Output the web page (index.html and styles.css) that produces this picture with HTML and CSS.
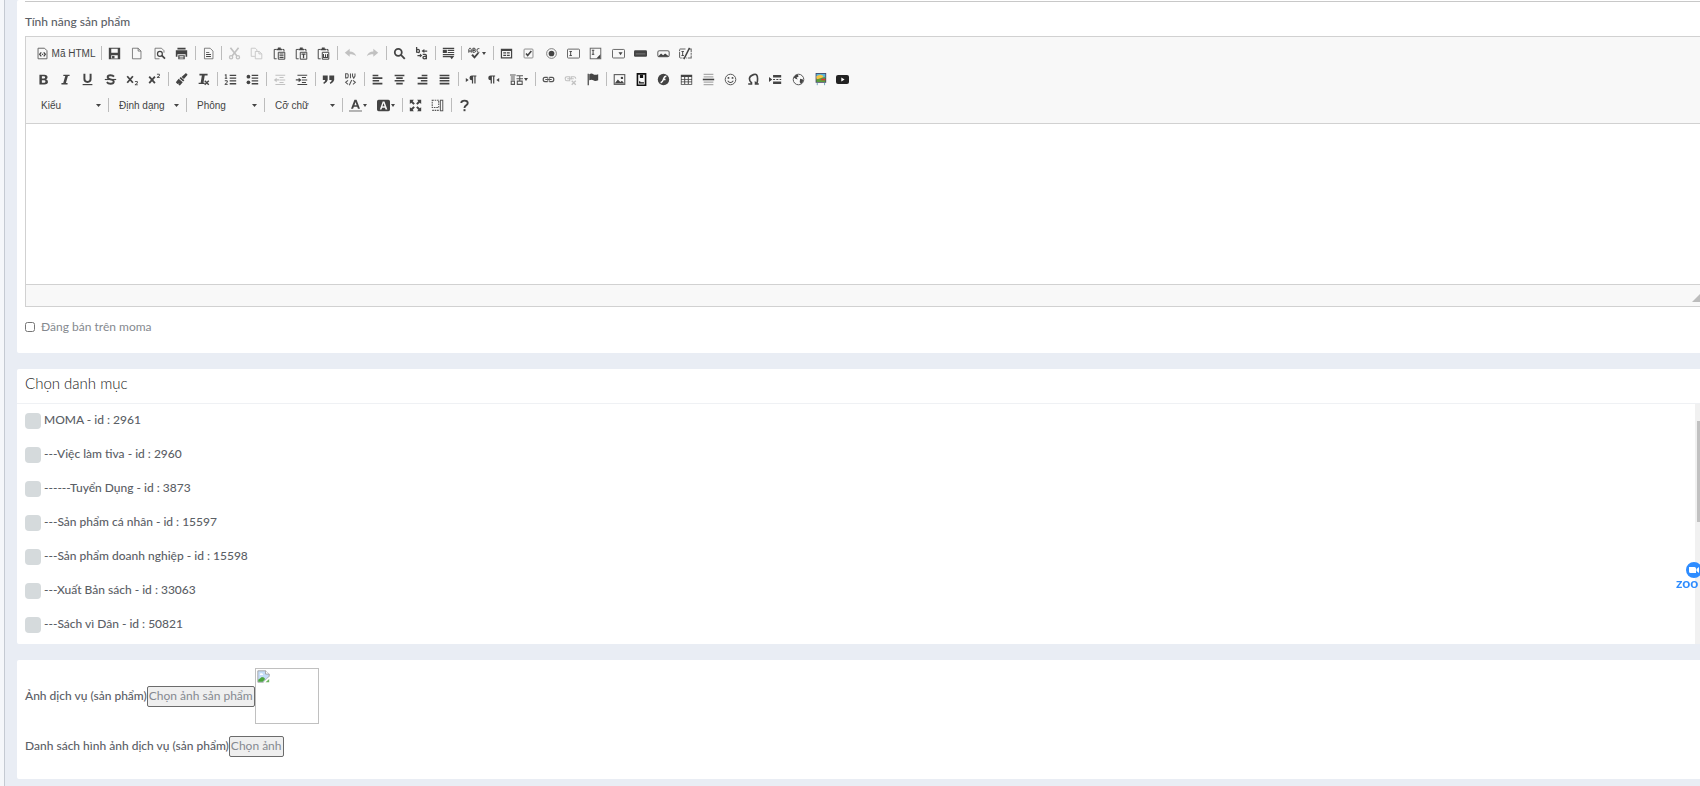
FILE: index.html
```html
<!DOCTYPE html>
<html lang="vi">
<head>
    <meta charset="UTF-8">
    <meta name="viewport" content="width=device-width, initial-scale=1.0">
    <title>Sản phẩm</title>
    <link rel="stylesheet" href="styles.css">
</head>
<body>

<svg class="sprite" aria-hidden="true">
    <symbol id="source" viewBox="0 0 16 16"><path d="M2.500 1.500h8l3 3v10h-11z" fill="none" stroke="#666" stroke-width="1.200"/><path d="M6.500 6.500 4.500 9l2 2.500M9.500 6.500l2 2.500-2 2.500" fill="none" stroke="#444" stroke-width="1.600"/><path d="M7.300 8.300h1.500v1.500H7.300z"/></symbol>
    <symbol id="save" viewBox="0 0 16 16"><path d="M1 1h14v14H1zM4 2v5h8V2zM4 10v4h8v-4z" fill-rule="evenodd"/><path d="M5 11h3v3H5z"/></symbol>
    <symbol id="newpage" viewBox="0 0 16 16"><path d="M3 1.500h7l3.500 3.500v9.500H3zM10 1.500V5h3.500" fill="none" stroke="#666"/></symbol>
    <symbol id="preview" viewBox="0 0 16 16"><path d="M13.500 7V4.500l-3-3h-8v13H8" fill="none" stroke="#666"/><circle cx="8.500" cy="8.500" r="3" fill="none" stroke="#444" stroke-width="1.500"/><path d="m10 11 1.500-1.500 4 4-1.500 1.500z"/></symbol>
    <symbol id="print" viewBox="0 0 16 16"><path d="M3 1h10v2H3zM1 4h14v8h-2V9H3v3H1z"/><path d="M4 10h8v5H4zm1.500 1v1h5v-1zm0 2v1h5v-1z" fill-rule="evenodd"/></symbol>
    <symbol id="templates" viewBox="0 0 16 16"><path d="M3 1.500h7l3.500 3.500v9.500H3z" fill="none" stroke="#666"/><path d="M5 6h4v1H5zM5 8.500h6v1.200H5zM5 11h6v1.200H5z"/></symbol>
    <symbol id="cut" viewBox="0 0 16 16"><path d="m3 1 8 10M13 1 5 11" fill="none" stroke="#444" stroke-width="2"/><circle cx="3.800" cy="12.500" r="2" fill="none" stroke="#444" stroke-width="1.600"/><circle cx="12.200" cy="12.500" r="2" fill="none" stroke="#444" stroke-width="1.600"/></symbol>
    <symbol id="copy" viewBox="0 0 16 16"><path d="M6 11.500H1.500v-10h5l2 2V5M6.500 5.500h5l3 3v6h-8z" fill="none" stroke="#444"/><path d="M11 5.500v3h3" fill="none" stroke="#444"/></symbol>
    <symbol id="paste" viewBox="0 0 16 16"><path d="M4.500 3H1.500v11.500h3M11.500 3h2v2.500" fill="none" stroke="#444" stroke-width="1.200"/><path d="M4.500 2H6V.5h3.500V2H11v2H4.500z"/><path d="M6.500 6.500h8v8.500h-8z" fill="none" stroke="#444" stroke-width="1.200"/></symbol>
    <symbol id="pastelines" viewBox="0 0 16 16"><use href="#paste"/><path d="M8 8h5v1.200H8zM8 10.200h5v1.200H8zM8 12.300h5v1.200H8z"/></symbol>
    <symbol id="pastetext" viewBox="0 0 16 16"><use href="#paste"/><path d="M8 8h5v1.500h-1.700v4.300H9.700V9.500H8z"/></symbol>
    <symbol id="pasteword" viewBox="0 0 16 16"><use href="#paste"/><path d="M8 8.500v4.500h5V8.500M10.500 9v4" fill="none" stroke="#444" stroke-width="1.300"/></symbol>
    <symbol id="undo" viewBox="0 0 16 16"><path d="m1 7 6-5v3.500c4 0 7 2 8 6-2-2-4.500-2.500-8-2.500v3z"/></symbol>
    <symbol id="redo" viewBox="0 0 16 16"><path d="M15 7 9 2v3.500c-4 0-7 2-8 6C3 9.500 5.500 9 9 9v3z"/></symbol>
    <symbol id="find" viewBox="0 0 16 16"><circle cx="6.500" cy="6.500" r="4.300" fill="none" stroke="#444" stroke-width="2.200"/><path d="m9 10.500 1.500-1.500 4.800 4.800-1.600 1.600z"/></symbol>
    <symbol id="replace" viewBox="0 0 16 16"><path d="M2 0v7M2 4.500q0-1.500 1.700-1.500T5.500 5 3.700 6.700 2 5M9.500 9h3q1.500 0 1.500 1.500V15M14 11.500h-2.500q-1.700 0-1.700 1.500t1.700 1.500T14 13M15 5h-4M3 10.500h4" fill="none" stroke="#444" stroke-width="1.600"/><path d="m8 5 3.500-2.500v5zM9 10.500 6 8v5z"/></symbol>
    <symbol id="selectall" viewBox="0 0 16 16"><path d="M1 1h14v1.500H1zM1 3.500h5v4H1zM7 3.500h8V5H7zM7 6h8v1.500H7zM1 8.500h14V10H1zM1 11h9v1.500H1zM9 11h6l-3 4z"/></symbol>
    <symbol id="spell" viewBox="0 0 16 16"><path d="M1 7V3l1-1.500h1L4 3v4M1 5h3M6 6.500v-5h1.500Q9 1.500 9 2.800T7.500 4H6h2q1.300.2 1.300 1.300T8 6.500zM14 2h-1.500Q11 2 11 4t1.500 2.500H14" fill="none" stroke="#444" stroke-width="1.200"/><path d="m4 10 2-1.500 2 2.500 4-4.500 1.500 1.500L8 14.500z"/></symbol>
    <symbol id="form" viewBox="0 0 16 16"><path d="M1 2h14v12H1zM2.500 5v7.500h11V5z" fill-rule="evenodd"/><path d="M4 6.500h3.500V8H4zM8.500 6.500H12V8H8.500zM4 9.500h3.500V11H4zM8.500 9.500H12V11H8.500z"/></symbol>
    <symbol id="checkbox" viewBox="0 0 16 16"><rect x="2.500" y="2.500" width="11" height="11" rx="1" fill="none" stroke="#777"/><path d="m5 8 2 2.500L11.500 5" fill="none" stroke="#444" stroke-width="2"/></symbol>
    <symbol id="radio" viewBox="0 0 16 16"><circle cx="8" cy="8" r="6" fill="none" stroke="#666"/><circle cx="8" cy="8" r="3.500"/></symbol>
    <symbol id="textfield" viewBox="0 0 16 16"><rect x=".6" y="2.600" width="14.800" height="11" rx="1" fill="none" stroke="#666" stroke-width="1.200"/><path d="M3 5.500h3M3 10.500h3M4.500 5.500v5" fill="none" stroke="#444" stroke-width="1.200"/></symbol>
    <symbol id="textarea" viewBox="0 0 16 16"><rect x="1.500" y="1.500" width="13" height="13" fill="none" stroke="#666" stroke-width="1.200"/><path d="M3.500 4h3M3.500 9h3M5 4v5" fill="none" stroke="#444" stroke-width="1.200"/><path d="M14 9v5H9z"/></symbol>
    <symbol id="select" viewBox="0 0 16 16"><rect x=".6" y="3" width="14.800" height="10.500" rx="1" fill="none" stroke="#666" stroke-width="1.200"/><path d="M8 6.500h5L10.500 10z"/></symbol>
    <symbol id="button" viewBox="0 0 16 16"><rect y="4" width="16" height="8" rx="1.500"/><path d="M2 8.500h12" stroke="#888"/></symbol>
    <symbol id="imagebutton" viewBox="0 0 16 16"><rect x="1" y="4.500" width="14" height="7.500" rx="2" fill="none" stroke="#666" stroke-width="1.300"/><path d="m2 11 3-3 2.500 2L10 8l4 3v1H2z"/></symbol>
    <symbol id="hidden" viewBox="0 0 16 16"><path d="M8 2.500H.7v11H6M12 2.500h3v11h-6" fill="none" stroke="#666" stroke-width="1.300" stroke-dasharray="7 1 2 1"/><path d="M3 5.500h3M3 10.500h3M4.500 5.500v5" fill="none" stroke="#444" stroke-width="1.200"/><path d="m6 15 7-14" stroke="#444" stroke-width="1.800"/></symbol>

    <symbol id="bold" viewBox="0 0 16 16"><path d="M3 2h6q4 0 4 3.200 0 2-1.800 2.600Q13.500 8.400 13.500 11q0 3-4.500 3H3zm3 2v2.800h2.500q1.500 0 1.500-1.400T8.500 4zm0 4.800V12h2.700q1.700 0 1.700-1.600T8.700 8.800z" fill-rule="evenodd"/></symbol>
    <symbol id="italic" viewBox="0 0 16 16"><path d="M5.500 2H13v1.700h-2L8.500 12.300h2V14H3v-1.700h2.200l2.500-8.600H5.200z"/></symbol>
    <symbol id="underline" viewBox="0 0 16 16"><path d="M4.200 1v6.500Q4.200 11 8 11t3.800-3.500V1" fill="none" stroke="#444" stroke-width="2.400"/><path d="M2 13.500h12V15H2z"/></symbol>
    <symbol id="strike" viewBox="0 0 16 16"><path d="M12.300 4.500Q11 2.800 8 2.800 4.500 2.800 4.500 5T8 7.800q4 .6 4 3T8 13.200Q5 13.200 3.500 11.300" fill="none" stroke="#444" stroke-width="2.300"/><path d="M1 7.300h14v1.400H1z"/></symbol>
    <symbol id="sub" viewBox="0 0 16 16"><path d="m1.500 4 7 8m0-8-7 8" stroke="#444" stroke-width="2.200"/><path d="M11 10.500h3v2l-3 2h3.500" fill="none" stroke="#444" stroke-width="1.100"/></symbol>
    <symbol id="sup" viewBox="0 0 16 16"><path d="m1.500 4.500 7 8m0-8-7 8" stroke="#444" stroke-width="2.200"/><path d="M11 1.500h3v2l-3 2h3.500" fill="none" stroke="#444" stroke-width="1.100"/></symbol>
    <symbol id="brush" viewBox="0 0 16 16"><path d="m13.500 0 2 2-4.500 5.500L8 5zM7 5l4.500 4-1.500 1.500L5.500 6.500zM4.500 7l5 4.500L6 15.500l-2-1L5.500 13 3 13.500l-2-2z"/></symbol>
    <symbol id="removeformat" viewBox="0 0 16 16"><path d="M3 1h10v2.200H9.500L8 12h1.500v1.500H2V12h2.500L6 3.200H3z"/><path d="m9.500 9.500 5 5m0-5-5 5" stroke="#444" stroke-width="1.700"/></symbol>
    <symbol id="ol" viewBox="0 0 16 16"><path d="M2.500 1.500v5M1 2.500h1.500M1 6.500h3M1 9.500h3v2L1 14h3.500" fill="none" stroke="#444" stroke-width="1.200"/><path d="M7 2h8v1.600H7zM7 5.400h8V7H7zM7 9h8v1.600H7zM7 12.400h8V14H7z"/></symbol>
    <symbol id="ul" viewBox="0 0 16 16"><circle cx="3" cy="4.500" r="2.300"/><circle cx="3" cy="11.500" r="2.300"/><path d="M7 2h8v1.600H7zM7 5.400h8V7H7zM7 9h8v1.600H7zM7 12.400h8V14H7z"/></symbol>
    <symbol id="outdent" viewBox="0 0 16 16"><path d="M3 2h12v1.300H3zM8 5h5v1.300H8zM8 8h7v1.300H8zM8 11h5v1.300H8zM3 13.500h12v1.300H3zM1 8.500 4.500 5.800v2h3v1.500h-3v2z"/></symbol>
    <symbol id="indent" viewBox="0 0 16 16"><path d="M3 2h12v1.300H3zM8.500 5h5v1.300h-5zM8.500 8H15v1.300H8.500zM8.500 11h5v1.300h-5zM3 13.500h12v1.300H3zM8 8.500 4.500 5.800v2H1v1.500h3.500v2z"/></symbol>
    <symbol id="quote" viewBox="0 0 16 16"><path d="M1 3h6v5.500Q6 12 2.500 13.500L1.500 12Q4 10.500 4 8.500H1zM9 3h6v5.500q-1 3.500-4.500 5L9.500 12q2.500-1.500 2.500-3.500H9z"/></symbol>
    <symbol id="div" viewBox="0 0 16 16"><path d="M2 1v5h2q1.200 0 1.200-2.500T4 1zM8 .5v6M10.500.5v3.300l1.500 2.700 1.500-2.700V.5M5 9l-3 2.500L5 14M11 9l3 2.500-3 2.500M9.500 8.500l-3 6.500" fill="none" stroke="#555" stroke-width="1.300"/></symbol>
    <symbol id="left" viewBox="0 0 16 16"><path d="M2 2h7v2H2zM2 5.300h12v2H2zM2 8.600h8v2H2zM2 12h12v2H2z"/></symbol>
    <symbol id="center" viewBox="0 0 16 16"><path d="M2 2h12v2H2zM4 5.300h8v2H4zM2 8.600h12v2H2zM4 12h8v2H4z"/></symbol>
    <symbol id="right" viewBox="0 0 16 16"><path d="M7 2h7v2H7zM2 5.300h12v2H2zM6 8.600h8v2H6zM2 12h12v2H2z"/></symbol>
    <symbol id="justify" viewBox="0 0 16 16"><path d="M2 2h12v2H2zM2 5.300h12v2H2zM2 8.600h12v2H2zM2 12h12v2H2z"/></symbol>
    <symbol id="ltr" viewBox="0 0 16 16"><path d="M1 6v5l3.500-2.500zM8.500 9Q5.500 9 5.500 6t3-3H14v1.300h-1V13h-1.500V4.300H10V13H8.500z"/></symbol>
    <symbol id="rtl" viewBox="0 0 16 16"><path d="M15 6v5l-3.500-2.500zM4.500 9q-3 0-3-3t3-3H10v1.300H9V13H7.500V4.300H6V13H4.500z"/></symbol>
    <symbol id="language" viewBox="0 0 16 16"><path d="M0 2.500h7M1 5h5M1 7.500h5M1.500 10h4v4h-4zM8 3.500h8M8 7h8M12 3v7M9 10h6v4H9z" fill="none" stroke="#555" stroke-width="1.300"/></symbol>
    <symbol id="link" viewBox="0 0 16 16"><path d="M7 5.500H3.500q-2 0-2 2.500t2 2.500H7M9 5.500h3.500q2 0 2 2.500t-2 2.500H9M4 8h8" fill="none" stroke="#555" stroke-width="1.500"/><path d="M7 5v6M9 5v6" stroke="#666"/></symbol>
    <symbol id="unlink" viewBox="0 0 16 16"><path d="M7 4.500H3.500q-2 0-2 2.500t2 2.500H7M9 4.500h3.500q2 0 2 2.500M4 7h8M7 4v6M9 4v4" fill="none" stroke="#444" stroke-width="1.300"/><path d="m9.500 9.500 5 5m0-5-5 5" stroke="#444" stroke-width="1.600"/></symbol>
    <symbol id="anchor" viewBox="0 0 16 16"><path d="M2 1h1.500v14H2zM4 1.500q3-1.500 5 0t6 0V9q-4 1.500-6 0T4 9z"/></symbol>
    <symbol id="image" viewBox="0 0 16 16"><rect x="1.500" y="2" width="13" height="12" fill="none" stroke="#555" stroke-width="1.300"/><path d="m2 13 4-5 3 3 2-1.500 3 3.500z"/><circle cx="11" cy="6" r="1.500"/></symbol>
    <symbol id="doc" viewBox="0 0 16 16"><path d="M2 0h12v16H2zM4 2v12h8V2z" fill="#111" fill-rule="evenodd"/><path d="M6 2h4v4H6zM5 10h1.500v1.500H11V13H5z" fill="#111"/></symbol>
    <symbol id="flash" viewBox="0 0 16 16"><circle cx="8" cy="8" r="7"/><path d="M11.500 4Q9 4 8 7.500T4.500 12M7 8h3.500" fill="none" stroke="#fff" stroke-width="1.800"/></symbol>
    <symbol id="table" viewBox="0 0 16 16"><path d="M1 2h14v12.500H1zM2 5v2.300h3.200V5zm4.400 0v2.300h3.200V5zm4.400 0v2.300H14V5zM2 8.300v2.200h3.200V8.300zm4.400 0v2.200h3.200V8.300zm4.400 0v2.200H14V8.300zM2 11.500v2h3.200v-2zm4.400 0v2h3.200v-2zm4.400 0v2H14v-2z" fill-rule="evenodd"/></symbol>
    <symbol id="hr" viewBox="0 0 16 16"><path d="M2 1h12v1.500H2zM2 4h12v1.500H2zM2 10.500h12V12H2zM2 13.500h12V15H2z" fill="#aaa"/><path d="M1 7h14v2H1z"/></symbol>
    <symbol id="smiley" viewBox="0 0 16 16"><circle cx="8" cy="8" r="6.500" fill="none" stroke="#555" stroke-width="1.200"/><circle cx="5.500" cy="6" r="1.200"/><circle cx="10.500" cy="6" r="1.200"/><path d="M4.500 9.500Q8 14 11.500 9.500" fill="none" stroke="#444" stroke-width="1.300"/></symbol>
    <symbol id="omega" viewBox="0 0 16 16"><path d="M1.500 13.500h4V12Q3 10 3 7t5-5 5 5-2.500 5v1.500h4" fill="none" stroke="#444" stroke-width="2"/></symbol>
    <symbol id="pagebreak" viewBox="0 0 16 16"><path d="m0 5 4 3-4 3zM5 2.500h10v3H5zM5 10.500h10v3H5zM5 7.300h2.500v1.400H5zM9 7.300h2.500v1.400H9zM13 7.300h2v1.400h-2z"/></symbol>
    <symbol id="globe" viewBox="0 0 16 16"><circle cx="8" cy="8" r="6.500" fill="none" stroke="#555" stroke-width="1.200"/><path d="M2 5.500 5 2l2.500.5.5 2-2.500 1L7 8 4.500 7zM10 7l3.500 1v2.500L11 13.500 9.500 11z"/></symbol>
    <symbol id="gallery" viewBox="0 0 16 16"><path d="M2 0h13v12H2z" fill="#446"/><path d="M3 1h11v5H3z" fill="#59b6d9"/><path d="M3 4q5-4 9 0l-4 4H3z" fill="#f6c544"/><path d="M3 8q6-2 11-3v6H3z" fill="#5b9e3c"/><path d="M9 7h5v2H9z" fill="#d33"/><path d="M4 12v3M13 12v3" stroke="#59a"/></symbol>
    <symbol id="youtube" viewBox="0 0 16 16"><rect y="2.500" width="16" height="11" rx="2.500" fill="#222"/><path d="m6.500 5.500 4 2.500-4 2.500z" fill="#fff"/></symbol>

    <symbol id="textcolor" viewBox="0 0 16 16"><path d="M6.700 1h2.600l4.200 11H11l-.9-2.500H6L5 12H2.500zM8 3.800 6.700 7.700h2.700z" fill-rule="evenodd"/><path d="M0 14h16v1.500H0z" fill="#888"/></symbol>
    <symbol id="bgcolor" viewBox="0 0 16 16"><path d="M2 1h12q2 0 2 2v10q0 2-2 2H2q-2 0-2-2V3q0-2 2-2zm5 2L3.500 13h2l.8-2.300h3.500l.7 2.300h2.200L9.200 3zm1 2 1.300 4H6.800z" fill-rule="evenodd"/></symbol>
    <symbol id="maximize" viewBox="0 0 16 16"><path d="M1 1h5L4.600 2.800l2.600 2.700-1.700 1.700-2.700-2.600L1 6zM15 1v5l-1.800-1.400-2.700 2.600-1.700-1.700 2.600-2.700L10 1zM1 15v-5l1.800 1.400 2.700-2.600 1.700 1.700-2.600 2.700L6 15zM15 15h-5l1.400-1.800-2.600-2.700 1.700-1.700 2.700 2.600L15 10z"/></symbol>
    <symbol id="blocks" viewBox="0 0 16 16"><path d="M1.500 1.500h8v9h-8zM1.500 14h9" fill="none" stroke="#555" stroke-width="1.300" stroke-dasharray="2 1"/><rect x="11.500" y="1.500" width="3" height="13" fill="none" stroke="#555" stroke-width="1.200"/></symbol>
    <symbol id="about" viewBox="0 0 16 16"><path d="M4 5Q4 2 8 2t4 3q0 1.700-2 2.800T8 11" fill="none" stroke="#444" stroke-width="2.300"/><path d="M6.800 12.500h2.400V15H6.800z"/></symbol>
    <symbol id="broken" viewBox="0 0 16 16"><path d="M1 1h9.500L15 5v3l-3.500 3L8 15H1z" fill="#c5dcf7" stroke="#999"/><path d="M10.500 1v4H15" fill="#fff" stroke="#999"/><path d="M3.500 5.500q0-1.500 1.500-1.500 2.500-.5 2.500 2h-4z" fill="#fff"/><path d="M1.500 14.500V12L6 8.500q3 0 4 2.500l-3 3.500z" fill="#4da53c"/><path d="m8 15 7-6.500V15z" fill="#fff"/><path d="m10.500 15 4.500-4v4z" fill="#6cb35c"/></symbol>
</svg>

<div class="page">
    <div class="sidebar-edge"></div>
    <main class="content">

        <section class="panel panel-editor">
            <div class="field-end"></div>
            <label class="field-label" for="feature">Tính năng sản phẩm</label>
            <div class="editor">
                <div class="toolbar">
                    <div class="toolbar-row">
                        <button type="button" class="tool tool-source"><svg><use href="#source"/></svg>Mã HTML</button>
                        <span class="sep"></span>
                        <div class="tools tools-4">
                            <button type="button" class="tool" title="Lưu"><svg><use href="#save"/></svg></button>
                            <button type="button" class="tool" title="Trang mới"><svg><use href="#newpage"/></svg></button>
                            <button type="button" class="tool" title="Xem trước"><svg><use href="#preview"/></svg></button>
                            <button type="button" class="tool" title="In"><svg><use href="#print"/></svg></button>
                        </div>
                        <span class="sep"></span>
                        <button type="button" class="tool" title="Mẫu dựng sẵn"><svg><use href="#templates"/></svg></button>
                        <span class="sep"></span>
                        <div class="tools tools-5">
                            <button type="button" class="tool" title="Cắt" disabled><svg><use href="#cut"/></svg></button>
                            <button type="button" class="tool" title="Sao chép" disabled><svg><use href="#copy"/></svg></button>
                            <button type="button" class="tool" title="Dán"><svg><use href="#pastelines"/></svg></button>
                            <button type="button" class="tool" title="Dán văn bản"><svg><use href="#pastetext"/></svg></button>
                            <button type="button" class="tool" title="Dán từ Word"><svg><use href="#pasteword"/></svg></button>
                        </div>
                        <span class="sep"></span>
                        <div class="tools tools-2">
                            <button type="button" class="tool" title="Hoàn tác" disabled><svg><use href="#undo"/></svg></button>
                            <button type="button" class="tool" title="Làm lại" disabled><svg><use href="#redo"/></svg></button>
                        </div>
                        <span class="sep"></span>
                        <div class="tools tools-2">
                            <button type="button" class="tool" title="Tìm kiếm"><svg><use href="#find"/></svg></button>
                            <button type="button" class="tool" title="Thay thế"><svg><use href="#replace"/></svg></button>
                        </div>
                        <span class="sep"></span>
                        <button type="button" class="tool" title="Chọn tất cả"><svg><use href="#selectall"/></svg></button>
                        <span class="sep"></span>
                        <button type="button" class="tool tool-menu" title="Kiểm tra chính tả"><svg><use href="#spell"/></svg></button>
                        <span class="sep"></span>
                        <div class="tools tools-9">
                            <button type="button" class="tool" title="Biểu mẫu"><svg><use href="#form"/></svg></button>
                            <button type="button" class="tool" title="Nút kiểm"><svg><use href="#checkbox"/></svg></button>
                            <button type="button" class="tool" title="Nút chọn"><svg><use href="#radio"/></svg></button>
                            <button type="button" class="tool" title="Trường văn bản"><svg><use href="#textfield"/></svg></button>
                            <button type="button" class="tool" title="Vùng văn bản"><svg><use href="#textarea"/></svg></button>
                            <button type="button" class="tool" title="Ô chọn"><svg><use href="#select"/></svg></button>
                            <button type="button" class="tool" title="Nút"><svg><use href="#button"/></svg></button>
                            <button type="button" class="tool" title="Nút hình ảnh"><svg><use href="#imagebutton"/></svg></button>
                            <button type="button" class="tool" title="Trường ẩn"><svg><use href="#hidden"/></svg></button>
                        </div>
                    </div>

                    <div class="toolbar-row">
                        <div class="tools tools-6">
                            <button type="button" class="tool" title="Đậm"><svg><use href="#bold"/></svg></button>
                            <button type="button" class="tool" title="Nghiêng"><svg><use href="#italic"/></svg></button>
                            <button type="button" class="tool" title="Gạch chân"><svg><use href="#underline"/></svg></button>
                            <button type="button" class="tool" title="Gạch ngang"><svg><use href="#strike"/></svg></button>
                            <button type="button" class="tool" title="Chỉ số dưới"><svg><use href="#sub"/></svg></button>
                            <button type="button" class="tool" title="Chỉ số trên"><svg><use href="#sup"/></svg></button>
                        </div>
                        <span class="sep"></span>
                        <div class="tools tools-2">
                            <button type="button" class="tool" title="Sao chép định dạng"><svg><use href="#brush"/></svg></button>
                            <button type="button" class="tool" title="Xoá định dạng"><svg><use href="#removeformat"/></svg></button>
                        </div>
                        <span class="sep"></span>
                        <div class="tools tools-2">
                            <button type="button" class="tool" title="Danh sách có thứ tự"><svg><use href="#ol"/></svg></button>
                            <button type="button" class="tool" title="Danh sách"><svg><use href="#ul"/></svg></button>
                        </div>
                        <span class="sep"></span>
                        <div class="tools tools-2">
                            <button type="button" class="tool" title="Dịch ra ngoài" disabled><svg><use href="#outdent"/></svg></button>
                            <button type="button" class="tool" title="Dịch vào trong"><svg><use href="#indent"/></svg></button>
                        </div>
                        <span class="sep"></span>
                        <div class="tools tools-2">
                            <button type="button" class="tool" title="Khối trích dẫn"><svg><use href="#quote"/></svg></button>
                            <button type="button" class="tool" title="Khối DIV"><svg><use href="#div"/></svg></button>
                        </div>
                        <span class="sep"></span>
                        <div class="tools tools-4">
                            <button type="button" class="tool" title="Canh trái"><svg><use href="#left"/></svg></button>
                            <button type="button" class="tool" title="Canh giữa"><svg><use href="#center"/></svg></button>
                            <button type="button" class="tool" title="Canh phải"><svg><use href="#right"/></svg></button>
                            <button type="button" class="tool" title="Canh đều"><svg><use href="#justify"/></svg></button>
                        </div>
                        <span class="sep"></span>
                        <div class="tools tools-2">
                            <button type="button" class="tool" title="Trái sang phải"><svg><use href="#ltr"/></svg></button>
                            <button type="button" class="tool" title="Phải sang trái"><svg><use href="#rtl"/></svg></button>
                        </div>
                        <button type="button" class="tool tool-menu" title="Ngôn ngữ"><svg><use href="#language"/></svg></button>
                        <span class="sep"></span>
                        <div class="tools tools-3">
                            <button type="button" class="tool" title="Liên kết"><svg><use href="#link"/></svg></button>
                            <button type="button" class="tool" title="Xoá liên kết" disabled><svg><use href="#unlink"/></svg></button>
                            <button type="button" class="tool" title="Điểm neo"><svg><use href="#anchor"/></svg></button>
                        </div>
                        <span class="sep"></span>
                        <div class="tools tools-11">
                            <button type="button" class="tool" title="Hình ảnh"><svg><use href="#image"/></svg></button>
                            <button type="button" class="tool" title="Tài liệu"><svg><use href="#doc"/></svg></button>
                            <button type="button" class="tool" title="Flash"><svg><use href="#flash"/></svg></button>
                            <button type="button" class="tool" title="Bảng"><svg><use href="#table"/></svg></button>
                            <button type="button" class="tool" title="Đường phân cách"><svg><use href="#hr"/></svg></button>
                            <button type="button" class="tool" title="Biểu cảm"><svg><use href="#smiley"/></svg></button>
                            <button type="button" class="tool" title="Ký tự đặc biệt"><svg><use href="#omega"/></svg></button>
                            <button type="button" class="tool" title="Ngắt trang"><svg><use href="#pagebreak"/></svg></button>
                            <button type="button" class="tool" title="IFrame"><svg><use href="#globe"/></svg></button>
                            <button type="button" class="tool" title="Thư viện ảnh"><svg><use href="#gallery"/></svg></button>
                            <button type="button" class="tool" title="YouTube"><svg><use href="#youtube"/></svg></button>
                        </div>
                    </div>

                    <div class="toolbar-row">
                        <select class="combo" aria-label="Kiểu"><option>Kiểu</option></select>
                        <span class="sep"></span>
                        <select class="combo" aria-label="Định dạng"><option>Định dạng</option></select>
                        <span class="sep"></span>
                        <select class="combo" aria-label="Phông"><option>Phông</option></select>
                        <span class="sep"></span>
                        <select class="combo" aria-label="Cỡ chữ"><option>Cỡ chữ</option></select>
                        <span class="sep"></span>
                        <button type="button" class="tool tool-menu" title="Màu chữ"><svg><use href="#textcolor"/></svg></button>
                        <button type="button" class="tool tool-menu" title="Màu nền"><svg><use href="#bgcolor"/></svg></button>
                        <span class="sep"></span>
                        <div class="tools tools-2">
                            <button type="button" class="tool" title="Phóng to tối đa"><svg><use href="#maximize"/></svg></button>
                            <button type="button" class="tool" title="Hiển thị các khối"><svg><use href="#blocks"/></svg></button>
                        </div>
                        <span class="sep"></span>
                        <button type="button" class="tool" title="Thông tin"><svg><use href="#about"/></svg></button>
                    </div>
                </div>
                <textarea id="feature" class="editor-area"></textarea>
                <div class="editor-bottom"><span class="resizer"></span></div>
            </div>
            <label class="moma"><input type="checkbox"> Đăng bán trên moma</label>
        </section>

        <section class="panel">
            <h2 class="panel-title">Chọn danh mục</h2>
            <div class="category-box">
                <div class="category-list">
                    <label class="category"><input type="checkbox">MOMA - id : 2961</label>
                    <label class="category"><input type="checkbox">---Việc làm tiva - id : 2960</label>
                    <label class="category"><input type="checkbox">------Tuyển Dụng - id : 3873</label>
                    <label class="category"><input type="checkbox">---Sản phẩm cá nhân - id : 15597</label>
                    <label class="category"><input type="checkbox">---Sản phẩm doanh nghiệp - id : 15598</label>
                    <label class="category"><input type="checkbox">---Xuất Bản sách - id : 33063</label>
                    <label class="category"><input type="checkbox">---Sách vì Dân - id : 50821</label>
                </div>
                <div class="scroll-track"><div class="scroll-thumb"></div></div>
            </div>
        </section>

        <section class="panel panel-images">
            <div class="image-row">
                <label for="pickImage">Ảnh dịch vụ (sản phẩm)</label>
                <button type="button" class="pick" id="pickImage">Chọn ảnh sản phẩm</button>
                <span class="thumb"><svg><use href="#broken"/></svg></span>
            </div>
            <div class="image-row">
                <label for="pickImages">Danh sách hình ảnh dịch vụ (sản phẩm)</label>
                <button type="button" class="pick" id="pickImages">Chọn ảnh</button>
            </div>
        </section>

    </main>
</div>

<a href="#" class="zoom-badge">
    <svg viewBox="0 0 16 16"><circle cx="8" cy="8" r="8" fill="#2d8cff"/><path d="M3 5h5.500q1.500 0 1.500 1.500V11H4.500Q3 11 3 9.500zM10.500 7 13 5v6l-2.500-2z" fill="#fff"/></svg>
    <span>zoo</span>
</a>

</body>
</html>
```
FILE: styles.css
```css
* {
    box-sizing: border-box;
}
body {
    font-family: Lato, "Open Sans", sans-serif;
    font-size: 12px;
    color: #5b6066;
    background: #e9edf4;
    margin: 0;
    overflow-x: hidden;
}
.sprite {
    display: none;
}
.page {
    display: flex;
    min-height: 100vh;
}
.sidebar-edge {
    width: 5px;
    background: #f5f7fa;
    border-right: 1px solid #c5cad2;
}
.content {
    flex: 1;
    min-width: 0;
    padding-left: 12px;
    display: flex;
    flex-direction: column;
    gap: 16px;
}
.panel {
    background: #fff;
    border-radius: 2px 0 0 2px;
}

/* editor */
.panel-editor {
    padding: 0 0 18px 8px;
}
.field-end {
    height: 2px;
    border-bottom: 1px solid #c8c8c8;
}
.field-label {
    display: block;
    padding: 12px 0 6px;
    line-height: 16px;
    font-weight: 500;
}
.editor {
    border: 1px solid #d1d1d1;
    border-right: 0;
}
.toolbar {
    background: #f8f8f8;
    border-bottom: 1px solid #d1d1d1;
    padding: 3px 0 5px 6px;
}
.toolbar-row {
    display: flex;
    align-items: center;
    height: 26px;
}
.tools {
    display: flex;
}
.tools .tool {
    flex: 1;
}
.tools-2 { width: 45px; }
.tools-3 { width: 67px; }
.tools-4 { width: 90px; }
.tools-5 { width: 112px; }
.tools-6 { width: 134px; }
.tools-9 { width: 202px; }
.tools-11 { width: 246px; }
.tool {
    display: flex;
    align-items: center;
    justify-content: center;
    min-width: 22px;
    height: 22px;
    padding: 0;
    border: 0;
    background: none;
    color: #444;
}
.tool svg {
    flex-shrink: 0;
    width: 13px;
    height: 13px;
    fill: #444;
}
.tool:disabled {
    opacity: 0.3;
}
.tool-source {
    width: 67px;
    gap: 3px;
    font: 10px "Liberation Sans", Arial, sans-serif;
    white-space: nowrap;
}
.tool-menu {
    width: 28px;
    gap: 1px;
}
.tool-menu::after {
    content: "";
    border: 2px solid transparent;
    border-top: 3px solid #444;
    border-bottom: 0;
}
.sep {
    width: 1px;
    height: 14px;
    margin: 0 1px 0 2px;
    background: #bcbcbc;
}
.combo {
    appearance: none;
    width: 74px;
    height: 22px;
    padding: 0 9px;
    border: 0;
    font: 10px "Liberation Sans", Arial, sans-serif;
    color: #444;
    background: url("data:image/svg+xml,%3Csvg xmlns='http://www.w3.org/2000/svg' width='5' height='3'%3E%3Cpath d='M0 0h5L2.500 3z' fill='%23444'/%3E%3C/svg%3E") no-repeat right 5px center;
}
.editor-area {
    display: block;
    width: 100%;
    height: 160px;
    border: 0;
    padding: 16px;
    resize: none;
    background: #fff;
}
.editor-bottom {
    display: flex;
    justify-content: flex-end;
    align-items: flex-end;
    height: 22px;
    padding-bottom: 4px;
    background: #f8f8f8;
    border-top: 1px solid #d1d1d1;
}
.resizer {
    border-left: 8px solid transparent;
    border-bottom: 8px solid #bcbcbc;
}
.moma {
    display: flex;
    align-items: center;
    gap: 6px;
    padding-top: 12px;
    line-height: 16px;
    color: #85898f;
}
.moma input {
    width: 10px;
    height: 10px;
    margin: 0;
}

/* categories */
.panel-title {
    margin: 0;
    padding: 4px 8px 10px;
    font-size: 15px;
    line-height: 20px;
    font-weight: 300;
    color: #222;
    border-bottom: 1px solid #eff1f4;
}
.category-box {
    display: flex;
    height: 240px;
}
.category-list {
    flex: 1;
    padding: 0 8px;
    overflow: hidden;
}
.category {
    display: flex;
    align-items: flex-start;
    gap: 3px;
    height: 34px;
    padding-top: 9px;
    line-height: 14px;
    font-weight: 500;
}
.category input {
    appearance: none;
    width: 16px;
    height: 16px;
    margin: 0;
    border-radius: 4px;
    background: #d5dadc;
}
.scroll-track {
    width: 5px;
    padding: 17px 0 0 2px;
    background: #f1f1f1;
}
.scroll-thumb {
    height: 101px;
    background: #c1c1c1;
}

/* images */
.panel-images {
    padding: 8px 8px 22px;
}
.image-row {
    display: flex;
    align-items: center;
    font-weight: 500;
}
.image-row label {
    padding-bottom: 2px;
}
.image-row + .image-row {
    margin-top: 12px;
}
.pick {
    height: 21px;
    padding: 0 1px 2px;
    border: 1px solid #6b6b6b;
    border-radius: 2px;
    background: #efefef;
    font-family: inherit;
    font-size: 12px;
    color: #85898f;
}
.thumb {
    width: 64px;
    height: 56px;
    padding: 1px;
    border: 1px solid #c0c0c0;
}
.thumb svg {
    display: block;
    width: 13px;
    height: 13px;
}

.zoom-badge {
    position: fixed;
    right: 0;
    top: 562px;
    width: 24px;
    overflow: hidden;
    color: #2d8cff;
    font-size: 14px;
    line-height: 10px;
    font-weight: 700;
    text-decoration: none;
}
.zoom-badge svg {
    display: block;
    width: 16px;
    height: 16px;
    margin-left: 10px;
}
.zoom-badge span {
    display: block;
}
```
